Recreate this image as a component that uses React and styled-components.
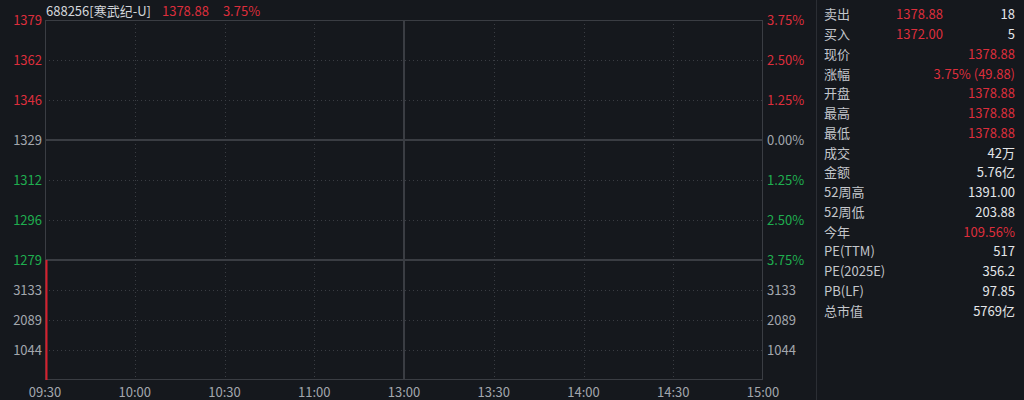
import React from "react";
import styled, { createGlobalStyle } from "styled-components";

const RED = "#dd2e3c";
const GREEN = "#1fae4f";
const GRAY = "#a3a7ad";
const BG = "#15181d";
const GRID = "#3a3d43";

const Global = createGlobalStyle`
  html, body { margin: 0; padding: 0; background: ${BG}; }
  body { font-family: "Noto Sans CJK SC", "Noto Sans", sans-serif; font-size: 13px; }
`;

const Page = styled.div`
  display: flex;
  width: 1024px;
  height: 400px;
  background: ${BG};
  overflow: hidden;
`;

const ChartSection = styled.div`
  width: 816px;
  display: grid;
  grid-template-columns: 45px 718px 53px;
  grid-template-rows: 380px 20px;
`;

const Axis = styled.div`
  display: flex;
  flex-direction: column;
  padding-top: 10px;
  align-items: ${(p) => (p.$side === "left" ? "flex-end" : "flex-start")};
  padding-right: ${(p) => (p.$side === "left" ? "3px" : "0")};
  padding-left: ${(p) => (p.$side === "right" ? "4px" : "0")};
`;

const AxisLabel = styled.div`
  height: 20px;
  line-height: 20px;
  margin-bottom: ${(p) => p.$gap}px;
  color: ${(p) => p.$color};
  font-size: 13px;
  white-space: nowrap;
`;

const Middle = styled.div`
  display: flex;
  flex-direction: column;
`;

const Header = styled.div`
  height: 20px;
  display: flex;
  align-items: center;
  padding-left: 1px;
  font-size: 13px;
  white-space: nowrap;
`;

const HeaderText = styled.span`
  color: ${(p) => p.$color};
  margin-right: ${(p) => p.$gap || 0}px;
`;

const TimeRow = styled.div`
  grid-column: 1 / 4;
  display: flex;
  padding-left: 0.125px;
`;

const TimeLabel = styled.div`
  width: 89.75px;
  flex: none;
  text-align: center;
  color: ${GRAY};
  line-height: 24px;
  font-size: 13px;
`;

const Separator = styled.div`
  width: 1px;
  background: #2b2e34;
`;

const Panel = styled.div`
  flex: 1;
  padding: 4px 9px 0 7px;
  display: flex;
  flex-direction: column;
`;

const Row = styled.div`
  height: 19.75px;
  display: grid;
  grid-template-columns: ${(p) => (p.$three ? "1fr 70px 72px" : "1fr auto")};
  align-items: center;
  font-size: 13px;
  white-space: nowrap;
`;

const Label = styled.span`
  color: #c3c6cb;
`;

const Value = styled.span`
  text-align: right;
  color: ${(p) => p.$color || "#e4e6e9"};
`;

const leftLabels = [
  ["1379", RED],
  ["1362", RED],
  ["1346", RED],
  ["1329", GRAY],
  ["1312", GREEN],
  ["1296", GREEN],
  ["1279", GREEN],
];
const rightLabels = [
  ["3.75%", RED],
  ["2.50%", RED],
  ["1.25%", RED],
  ["0.00%", GRAY],
  ["1.25%", GREEN],
  ["2.50%", GREEN],
  ["3.75%", GREEN],
];
const volLabels = ["3133", "2089", "1044"];
const times = ["09:30", "10:00", "10:30", "11:00", "13:00", "13:30", "14:00", "14:30", "15:00"];

const rows = [
  ["卖出", "1378.88", "18"],
  ["买入", "1372.00", "5"],
  ["现价", null, "1378.88", RED],
  ["涨幅", null, "3.75% (49.88)", RED],
  ["开盘", null, "1378.88", RED],
  ["最高", null, "1378.88", RED],
  ["最低", null, "1378.88", RED],
  ["成交", null, "42万"],
  ["金额", null, "5.76亿"],
  ["52周高", null, "1391.00"],
  ["52周低", null, "203.88"],
  ["今年", null, "109.56%", RED],
  ["PE(TTM)", null, "517"],
  ["PE(2025E)", null, "356.2"],
  ["PB(LF)", null, "97.85"],
  ["总市值", null, "5769亿"],
];

function AxisColumn({ side, labels }) {
  return (
    <Axis $side={side}>
      {labels.map(([t, c], i) => (
        <AxisLabel key={i} $color={c} $gap={i === labels.length - 1 ? 10 : 20}>
          {t}
        </AxisLabel>
      ))}
      {volLabels.map((t, i) => (
        <AxisLabel key={"v" + i} $color={GRAY} $gap={10}>
          {t}
        </AxisLabel>
      ))}
    </Axis>
  );
}

function ChartGrid() {
  const W = 718;
  const H = 360;
  const step = 89.75;
  const dottedH = [40, 80, 160, 200, 270, 300, 330];
  const verts = [1, 2, 3, 5, 6, 7];
  return (
    <svg width={W} height={H} style={{ display: "block" }}>
      {dottedH.map((y) => (
        <line key={y} x1={0} x2={W} y1={y + 0.5} y2={y + 0.5} stroke={GRID} strokeDasharray="1 3" />
      ))}
      {verts.map((i) => (
        <line key={i} x1={Math.round(i * step) + 0.5} x2={Math.round(i * step) + 0.5} y1={0} y2={H} stroke={GRID} strokeDasharray="1 3" />
      ))}
      <line x1={0} x2={W} y1={120} y2={120} stroke={GRID} strokeWidth={2} />
      <line x1={0} x2={W} y1={240} y2={240} stroke={GRID} strokeWidth={2} />
      <line x1={359} x2={359} y1={0} y2={H} stroke={GRID} strokeWidth={2} />
      <rect x={0.5} y={0.5} width={W - 1} height={H - 1} fill="none" stroke={GRID} />
      <line x1={1.5} x2={1.5} y1={240} y2={H} stroke="#d81e2c" strokeWidth={2} />
    </svg>
  );
}

export default function App() {
  return (
    <>
      <Global />
      <Page>
        <ChartSection>
          <AxisColumn side="left" labels={leftLabels} />
          <Middle>
            <Header>
              <HeaderText $color="#d3d6da" $gap={11}>688256[寒武纪-U]</HeaderText>
              <HeaderText $color={RED} $gap={14}>1378.88</HeaderText>
              <HeaderText $color={RED}>3.75%</HeaderText>
            </Header>
            <ChartGrid />
          </Middle>
          <AxisColumn side="right" labels={rightLabels} />
          <TimeRow>
            {times.map((t) => (
              <TimeLabel key={t}>{t}</TimeLabel>
            ))}
          </TimeRow>
        </ChartSection>
        <Separator />
        <Panel>
          {rows.map(([label, mid, val, color]) =>
            mid ? (
              <Row key={label} $three>
                <Label>{label}</Label>
                <Value $color={RED}>{mid}</Value>
                <Value>{val}</Value>
              </Row>
            ) : (
              <Row key={label}>
                <Label>{label}</Label>
                <Value $color={color}>{val}</Value>
              </Row>
            )
          )}
        </Panel>
      </Page>
    </>
  );
}
